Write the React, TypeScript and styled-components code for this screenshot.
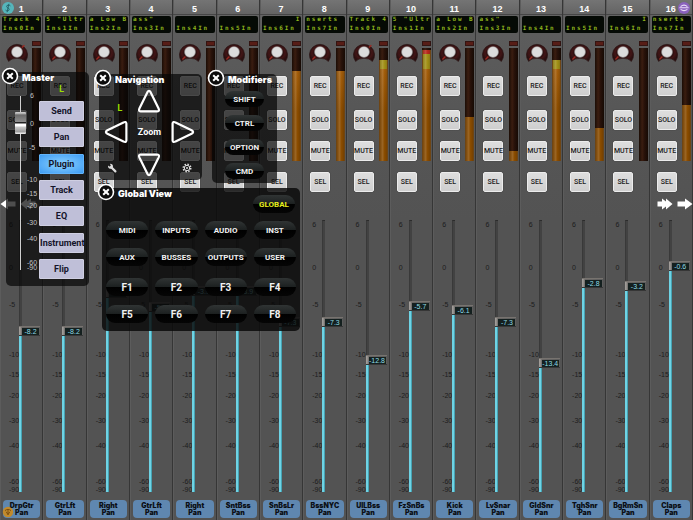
import React, { useState } from "react";
import styled, { createGlobalStyle, css } from "styled-components";

const Global = createGlobalStyle`
  * { box-sizing: border-box; }
  body { margin: 0; background: #545454; font-family: "Liberation Sans", Arial, sans-serif; }
  button { font-family: inherit; border: 0; padding: 0; cursor: pointer; }
`;

const wide = css`font-family: Inter, "Liberation Sans", sans-serif; font-weight: 900;`;

/* ---------- data ---------- */

type Strip = {
  name: string;
  lcd: string;
  db: number;
  meter: number;
  hot?: boolean;
};

const initialStrips: Strip[] = [
  { name: "DrpGtr", lcd: "Track 4", db: -8.2, meter: 0, hot: true },
  { name: "GtrLft", lcd: '5 "Ultr', db: -8.2, meter: 0 },
  { name: "Right", lcd: "a Low B", db: -4.2, meter: 0 },
  { name: "GtrLft", lcd: 'ass"', db: -5.8, meter: 0 },
  { name: "Right", lcd: "", db: -3.9, meter: 0 },
  { name: "SntBss", lcd: "", db: -3.9, meter: 0 },
  { name: "SnBsLr", lcd: "      I", db: -7.3, meter: 90 },
  { name: "BssNYC", lcd: "nserts", db: -7.3, meter: 90 },
  { name: "UlLBss", lcd: "Track 4", db: -12.8, meter: 101, hot: true },
  { name: "FzSnBs", lcd: '5 "Ultr', db: -5.7, meter: 111 },
  { name: "Kick", lcd: "a Low B", db: -6.1, meter: 44 },
  { name: "LvSnar", lcd: 'ass"', db: -7.3, meter: 10 },
  { name: "GldSnr", lcd: "", db: -13.4, meter: 101 },
  { name: "TghSnr", lcd: "", db: -2.8, meter: 33 },
  { name: "BgRmSn", lcd: "      I", db: -3.2, meter: 0 },
  { name: "Claps", lcd: "nserts", db: -0.6, meter: 56 },
];

const stripScale: [number, number][] = [
  [6, 43], [0, 37], [-5, 50], [-10, 20], [-15, 21],
  [-20, 25], [-30, 25], [-40, 36], [-60, 8], [-90, 8],
];

const masterScale: [number, number][] = [
  [6, 28], [0, 24], [-5, 32], [-10, 14], [-15, 12],
  [-20, 17], [-30, 16], [-40, 24], [-60, 5], [-90, 8],
];

/* Distance from the top of the scale for a level in dB. */
function travel(db: number) {
  let y = 0;
  for (let i = 0; i < stripScale.length - 1; i++) {
    const [from, gap] = stripScale[i];
    const to = stripScale[i + 1][0];
    if (db >= to) return Math.round(y + (gap * (from - db)) / (from - to));
    y += gap;
  }
  return y;
}

/* ---------- channel strips ---------- */

const Surface = styled.main`
  position: relative;
  min-height: 100vh;
  overflow: hidden;
  background: #545454;
`;

const Strips = styled.div`
  display: grid;
  grid-template-columns: repeat(16, minmax(0, 1fr));
  min-height: 100vh;
`;

const StripBox = styled.section`
  display: flex;
  flex-direction: column;
  border-right: 1px solid #363636;
  box-shadow: inset 1px 0 #5c5c5c;
  background: linear-gradient(#747474 0, #646464 14px, #5c5c5c 34px, #565656 120px, #535353 220px);
`;

const StripNumber = styled.h2`
  margin: 0;
  height: 15px;
  font-size: 9px;
  line-height: 18px;
  text-align: center;
  color: #fff;
  border-bottom: 1px solid #464646;
`;

const Lcd = styled.div`
  height: 17px;
  margin: 1px 1px 0 2px;
  padding: 0 0 0 1px;
  background: #050a05;
  border-radius: 2px;
  overflow: hidden;
`;

const LcdLine = styled.div<{ $second?: boolean }>`
  display: grid;
  grid-template-columns: repeat(7, minmax(0, 1fr));
  height: ${(p) => (p.$second ? 10 : 6)}px;
  line-height: ${(p) => (p.$second ? 12 : 5)}px;
  font-family: "DejaVu Sans Mono", monospace;
  font-size: 6px;
  font-weight: 700;
  color: #8fb51c;
  white-space: pre;
`;

const Middle = styled.div`
  display: flex;
  justify-content: space-between;
  padding: 7px 1px 28px 6px;
`;

const Controls = styled.div`
  display: flex;
  flex-direction: column;
  align-items: center;
  width: 22px;
`;

const Key = styled.button<{ $gap: number }>`
  width: 20px;
  height: 20px;
  margin-top: ${(p) => p.$gap}px;
  display: flex;
  justify-content: center;
  align-items: center;
  overflow: visible;
  font-family: Roboto, sans-serif;
  font-size: 7px;
  font-weight: 500;
  color: #1c1c1c;
  background: linear-gradient(#dedede, #cfcfcf);
  border: 1px solid #ececec;
  border-radius: 2px;
  box-shadow: 0 0 1px #222;
`;

const MeterColumn = styled.div`
  width: 9px;
  padding-top: 1px;
`;

const ClipLed = styled.div`
  height: 5px;
  margin-bottom: 2px;
  background: #571d16;
  border: 1px solid #331411;
`;

const Meter = styled.div`
  display: flex;
  flex-direction: column;
  justify-content: flex-end;
  height: 113px;
  background: linear-gradient(90deg, #1a0c05, #3a1d10 35%, #28120a 60%, #160a04);
`;

const MeterFill = styled.div`
  box-shadow: inset 1px 0 #6e4514, inset -1px 0 #6e4514;
  background:
    linear-gradient(90deg, #0003, #ffffff24 40%, #0000 60%, #0003),
    linear-gradient(0deg, #8a4c00 0 50px, #a55f0c 92px, #a19017 92px 107px, #b8291c 107px);
`;

const FaderArea = styled.div`
  display: flex;
  height: 272px;
  padding-left: 9px;
`;

const Ticks = styled.div<{ $light?: boolean }>`
  width: ${(p) => (p.$light ? 12 : 10)}px;
  padding-top: 1px;
  font-size: 7px;
  line-height: 8px;
  text-align: ${(p) => (p.$light ? "center" : "left")};
  color: ${(p) => (p.$light ? "#c4c4c4" : "#1c1c1c")};
  white-space: nowrap;
`;

const Tick = styled.div<{ $gap: number }>`
  height: ${(p) => p.$gap}px;
`;

const Track = styled.div`
  position: relative;
  display: flex;
  flex-direction: column;
  flex: 1;
  min-width: 0;
`;

const Slot = styled.div`
  flex: none;
  width: 3px;
  background: #424242;
  border-left: 1px solid #393939;
  border-top: 1px solid #2c2c2c;
`;

const Cap = styled.div`
  flex: none;
  display: flex;
  align-items: center;
  align-self: flex-start;
  height: 10px;
  padding: 0 1px 0 3px;
  background: linear-gradient(90deg, #a09c98 0 1px, #6b6866 3px, #5c5c5c);
  border-top: 1px solid #77736f;
  border-bottom: 1px solid #363636;
`;

const Readout = styled.output`
  display: block;
  min-width: 17px;
  height: 7px;
  line-height: 7px;
  font-size: 7px;
  text-align: center;
  color: #8fdbe4;
  background: #14201f;
`;

const Level = styled.div`
  flex: 1;
  width: 3px;
  background: #6fd3e4;
  border-right: 1px solid #46a3b4;
`;

const HiddenRange = styled.input`
  position: absolute;
  inset: 0;
  width: 100%;
  height: 100%;
  margin: 0;
  opacity: 0;
  writing-mode: vertical-lr;
  direction: rtl;
  cursor: pointer;
`;

const NamePlate = styled.button`
  && { ${wide} }
  height: 18px;
  margin: 8px 2px 2px 3px;
  font-size: 7px;
  line-height: 7px;
  color: #0b0f16;
  background: #5f87b0;
  border-radius: 4px;
  display: flex;
  flex-direction: column;
  align-items: center;
  justify-content: center;
`;

function Knob({ hot }: { hot?: boolean }) {
  return (
    <svg width="22" height="23" viewBox="0 0 22 23" aria-hidden="true">
      <defs>
        <radialGradient id="ring">
          <stop offset="0.45" stopColor="#1c0a0a" />
          <stop offset="0.75" stopColor="#421516" />
          <stop offset="1" stopColor="#2b1010" />
        </radialGradient>
      </defs>
      <path d="M2.6 21.4A10.6 10.6 0 1 1 19.4 21.4Q16.5 18.3 11 18.3Q5.5 18.3 2.6 21.4Z" fill="url(#ring)" stroke="#2a1414" strokeWidth="0.6" />
      <path d={hot ? "M16 7.6l2.4-2.4" : "M3.4 19.4l3-2.8"} stroke="#9c2a22" strokeWidth="1.4" />
      <circle cx="11" cy="12" r="5.8" fill="#9a9696" />
      <circle cx="11" cy="12" r="5" fill="#dcdcdc" />
    </svg>
  );
}

function LcdText({ text, second }: { text: string; second?: boolean }) {
  return (
    <LcdLine $second={second}>
      {text.split("").map((c, i) => (
        <span key={i}>{c}</span>
      ))}
    </LcdLine>
  );
}

function Scale({ scale, light }: { scale: [number, number][]; light?: boolean }) {
  return (
    <Ticks $light={light}>
      {scale.map(([db, gap]) => (
        <Tick key={db} $gap={gap}>{db}</Tick>
      ))}
    </Ticks>
  );
}

const keys: [string, number][] = [["REC", 13], ["SOLO", 14], ["MUTE", 11], ["SEL", 11]];

function ChannelStrip({ strip, index }: { strip: Strip; index: number }) {
  const [db, setDb] = useState(strip.db);
  return (
    <StripBox>
      <StripNumber>{index + 1}</StripNumber>
      <Lcd>
        <LcdText text={strip.lcd} />
        <LcdText text={`Ins${index % 8}In`} second />
      </Lcd>
      <Middle>
        <Controls>
          <Knob hot={strip.hot} />
          {keys.map(([label, gap]) => (
            <Key key={label} $gap={gap}>{label}</Key>
          ))}
        </Controls>
        <MeterColumn>
          <ClipLed />
          <Meter>
            <MeterFill style={{ height: strip.meter }} />
          </Meter>
        </MeterColumn>
      </Middle>
      <FaderArea>
        <Scale scale={stripScale} />
        <Track>
          <Slot style={{ height: Math.max(0, travel(db) - 6) }} />
          <Cap>
            <Readout>{db.toFixed(1)}</Readout>
          </Cap>
          <Level />
          <HiddenRange
            type="range"
            min={-90}
            max={6}
            step={0.1}
            value={db}
            aria-label={`${strip.name} level`}
            onChange={(e) => setDb(Number(e.target.value))}
          />
        </Track>
      </FaderArea>
      <NamePlate>
        <span>{strip.name}</span>
        <span>Pan</span>
      </NamePlate>
    </StripBox>
  );
}

/* ---------- badges and bank arrows ---------- */

const Badge = styled.button<{ $corner: "tl" | "tr" | "bl" }>`
  position: absolute;
  ${(p) => (p.$corner === "bl" ? "bottom: 2px;" : "top: 2px;")}
  ${(p) => (p.$corner === "tr" ? "right: 3px;" : "left: 2px;")}
  width: 12px;
  height: 12px;
  background: none;
  svg { display: block; }
`;

const BankArrows = styled.nav<{ $side: "left" | "right" }>`
  position: absolute;
  top: 198px;
  ${(p) => p.$side}: 0;
  display: flex;
  gap: 4px;
  button { background: none; height: 12px; }
  svg { display: block; }
`;

const singleArrow = "M0.5 3.5H8V0.5L15.5 6L8 11.5V8.5H0.5Z";
const doubleArrow = "M0.5 3.5H5V0.5L9 3.5V0.5L15.5 6L9 11.5V8.5L5 11.5V8.5H0.5Z";

function Arrow({ label, d, back }: { label: string; d: string; back?: boolean }) {
  return (
    <button aria-label={label}>
      <svg width="16" height="12" viewBox="0 0 16 12">
        <path d={d} fill="#fff" transform={back ? "matrix(-1 0 0 1 16 0)" : undefined} />
      </svg>
    </button>
  );
}

/* ---------- floating panels ---------- */

const Panel = styled.section<{ $x: number; $y: number; $w: number; $solid?: boolean }>`
  position: absolute;
  left: ${(p) => p.$x}px;
  top: ${(p) => p.$y}px;
  width: ${(p) => p.$w}px;
  border-radius: 5px;
  background: ${(p) => (p.$solid ? "rgba(8, 8, 8, 0.83)" : "rgba(6, 6, 6, 0.71)")};
`;

const CloseButton = styled.button`
  position: absolute;
  left: -5px;
  top: -5px;
  width: 18px;
  height: 18px;
  background: none;
  svg { display: block; }
`;

const TitleBar = styled.header`
  display: flex;
  justify-content: space-between;
  align-items: flex-start;
  padding: 0 5px 0 16px;
`;

const Title = styled.h3`
  ${wide}
  margin: 0;
  font-size: 9px;
  line-height: 12px;
  color: #fff;
  white-space: nowrap;
`;

function Close({ label }: { label: string }) {
  return (
    <CloseButton aria-label={`Close ${label}`}>
      <svg width="18" height="18" viewBox="0 0 18 18">
        <circle cx="9" cy="9" r="7.5" fill="#0c0c0c" stroke="#fff" strokeWidth="1.6" />
        <path d="M6.2 6.2L11.8 11.8M11.8 6.2L6.2 11.8" stroke="#fff" strokeWidth="2" />
      </svg>
    </CloseButton>
  );
}

const Pixel = styled.span<{ $inset?: boolean }>`
  font-family: "DejaVu Sans Mono", monospace;
  font-size: 9px;
  line-height: 10px;
  font-weight: 700;
  color: #9be000;
  ${(p) => p.$inset && "align-self: end; padding: 0 0 2px 8px;"}
`;

const MasterBody = styled.div`
  display: flex;
  padding: 0 5px 7px 9px;
`;

const MasterTrack = styled.div`
  position: relative;
  width: 11px;
  height: 174px;
  margin-top: 12px;
  padding-top: 16px;
  background: linear-gradient(#d0d0d0, #d0d0d0) center / 1px 100% no-repeat;
`;

const MasterCap = styled.div`
  height: 22px;
  border-radius: 1px;
  background: linear-gradient(#c8c8c8 0 1px, #6b6b6b 3px, #8f8f8f 10px, #222 10px 11px, #fff 12px 14px, #c9c9c9 15px, #9b9b9b 20px, #e6e6e6 21px);
`;

const MasterTicks = styled.div`
  margin-top: 7px;
  width: 13px;
`;

const ModeColumn = styled.div`
  flex: 1;
  display: flex;
  flex-direction: column;
  align-items: center;
`;

const ModeList = styled.div`
  display: flex;
  flex-direction: column;
  justify-content: space-between;
  width: 45px;
  height: 178px;
  margin-top: 7px;
`;

const ModeButton = styled.button<{ $on?: boolean }>`
  && { font-family: Roboto, "Liberation Sans", sans-serif; }
  height: 20px;
  font-size: 9px;
  font-weight: 700;
  color: #14142a;
  border-radius: 1px;
  background: ${(p) => (p.$on ? "radial-gradient(#8cd2ff, #3e9cf4)" : "#bfbfd8")};
  border: 1px solid ${(p) => (p.$on ? "#62b4fb" : "#cfcfe2")};
`;

const NavGrid = styled.div`
  display: grid;
  grid-template-columns: repeat(3, minmax(0, 1fr));
  grid-template-rows: 29px 34px 31px;
  justify-items: center;
  align-items: center;
  padding-right: 2px;
  button { background: none; height: 24px; }
  svg { display: block; }
`;

const ToolButton = styled.button<{ $side: "start" | "end" }>`
  justify-self: ${(p) => p.$side};
  width: 26px;
  height: 24px;
  display: flex;
  justify-content: center;
  padding-top: 10px;
`;

const ZoomLabel = styled.span`
  font-family: Roboto, sans-serif;
  font-size: 9px;
  font-weight: 700;
  color: #fff;
`;

const ModifierList = styled.div`
  display: flex;
  flex-direction: column;
  align-items: center;
  gap: 8px;
  padding: 5px 0 4px;
`;

const Pill = styled.button<{ $w?: number; $large?: boolean; $accent?: boolean }>`
  && { font-family: Roboto, "Liberation Sans", sans-serif; }
  width: ${(p) => (p.$w ? `${p.$w}px` : "100%")};
  height: ${(p) => (p.$w === 39 ? 16 : 18)}px;
  border-radius: 9px;
  font-size: ${(p) => (p.$large ? 10 : 8)}px;
  font-weight: 700;
  color: ${(p) => (p.$accent ? "#e8ee1c" : "#f2f2f2")};
  background: linear-gradient(#303434, #1c2020 50%, #000 50%, #050505);
`;

const FunctionGrid = styled.div<{ $last?: boolean }>`
  display: grid;
  grid-template-columns: repeat(4, minmax(0, 1fr));
  gap: 9px 7px;
  padding: ${(p) => (p.$last ? "12px 4px 8px" : "8px 4px 0")};
`;

const GlobalSlot = styled.div`
  display: flex;
  padding-top: 7px;
`;

const trianglePath = "M10.3 3.4Q12 0.4 13.7 3.4L21.6 19.5Q22.8 22.2 20.4 22.4H3.6Q1.2 22.2 2.4 19.5Z";

function Triangle({ label, angle }: { label: string; angle: number }) {
  return (
    <button aria-label={label}>
      <svg width="24" height="24" viewBox="0 0 24 24">
        <path d={trianglePath} fill="none" stroke="#fff" strokeWidth="2.2" strokeLinejoin="round" transform={`rotate(${angle} 12 12)`} />
      </svg>
    </button>
  );
}

const modes = ["Send", "Pan", "Plugin", "Track", "EQ", "Instrument", "Flip"];
const views = ["MIDI", "INPUTS", "AUDIO", "INST", "AUX", "BUSSES", "OUTPUTS", "USER"];

function MasterPanel() {
  const [mode, setMode] = useState("Plugin");
  return (
    <Panel $x={6} $y={72} $w={83}>
      <Close label="Master" />
      <TitleBar><Title>Master</Title></TitleBar>
      <MasterBody>
        <MasterTrack>
          <MasterCap />
          <HiddenRange type="range" aria-label="Master level" />
        </MasterTrack>
        <MasterTicks><Scale scale={masterScale} light /></MasterTicks>
        <ModeColumn>
          <Pixel>L</Pixel>
          <ModeList>
            {modes.map((m) => (
              <ModeButton key={m} $on={m === mode} onClick={() => setMode(m)}>{m}</ModeButton>
            ))}
          </ModeList>
        </ModeColumn>
      </MasterBody>
    </Panel>
  );
}

function NavigationPanel() {
  return (
    <Panel $x={99} $y={74} $w={103}>
      <Close label="Navigation" />
      <TitleBar><Title>Navigation</Title></TitleBar>
      <NavGrid>
        <Pixel $inset>L</Pixel>
        <Triangle label="Up" angle={0} />
        <span />
        <Triangle label="Left" angle={-90} />
        <ZoomLabel>Zoom</ZoomLabel>
        <Triangle label="Right" angle={90} />
        <ToolButton $side="start" aria-label="Tools">
          <svg width="10" height="10" viewBox="0 0 10 10">
            <path d="M4.3 4.3L8.4 8.4" stroke="#ddd" strokeWidth="2.2" strokeLinecap="round" />
            <path d="M1.1 2.6A2.5 2.5 0 1 0 2.9 0.9L3.8 2.2L3.4 3.3L2.2 3.6Z" fill="#ddd" />
          </svg>
        </ToolButton>
        <Triangle label="Down" angle={180} />
        <ToolButton $side="end" aria-label="Settings">
          <svg width="10" height="10" viewBox="0 0 10 10">
            <circle cx="5" cy="5" r="3.7" fill="none" stroke="#ddd" strokeWidth="1.6" strokeDasharray="1.5 1.4" />
            <circle cx="5" cy="5" r="2.7" fill="none" stroke="#ddd" />
            <circle cx="5" cy="5" r="1" fill="#ddd" />
          </svg>
        </ToolButton>
      </NavGrid>
    </Panel>
  );
}

export default function App() {
  return (
    <>
      <Global />
      <Surface>
        <Strips>
          {initialStrips.map((s, i) => (
            <ChannelStrip key={i} strip={s} index={i} />
          ))}
        </Strips>

        <Badge $corner="tl" aria-label="Session">
          <svg width="12" height="12" viewBox="0 0 12 12">
            <circle cx="6" cy="6" r="6" fill="#55b5bb" />
            <path d="M8.4 3.9C7.4 2.6 4.4 2.9 4.6 4.6C4.8 6 7.3 5.9 7.2 7.5C7 9.2 4.4 9.2 3.5 8M6.9 1.8L5.1 10.2" fill="none" stroke="#245f66" strokeWidth="0.9" />
          </svg>
        </Badge>
        <Badge $corner="tr" aria-label="Connection">
          <svg width="12" height="12" viewBox="0 0 12 12">
            <circle cx="6" cy="6" r="6" fill="#8a62bd" />
            <path d="M2.6 4.6Q6 1.6 9.4 4.6M1.4 5.8H10.6M2.6 7.4Q6 9.8 9.4 7.4" fill="none" stroke="#eadcf8" strokeWidth="1.1" />
          </svg>
        </Badge>
        <Badge $corner="bl" aria-label="Touch">
          <svg width="12" height="12" viewBox="0 0 12 12">
            <circle cx="6" cy="6" r="5.2" fill="#c18a2c" />
            <path d="M3 4.6C4.6 3 7.4 3 9 4.6M6 4V9M4.2 5.8L6 8.6L7.8 5.8" fill="none" stroke="#7c4f10" strokeWidth="1" />
          </svg>
        </Badge>

        <BankArrows $side="left">
          <Arrow label="Previous channel" d={singleArrow} back />
          <Arrow label="Previous bank" d={doubleArrow} back />
        </BankArrows>
        <BankArrows $side="right">
          <Arrow label="Next bank" d={doubleArrow} />
          <Arrow label="Next channel" d={singleArrow} />
        </BankArrows>

        <MasterPanel />
        <NavigationPanel />
        <Panel $x={212} $y={74} $w={65}>
          <Close label="Modifiers" />
          <TitleBar><Title>Modifiers</Title></TitleBar>
          <ModifierList>
            {["SHIFT", "CTRL", "OPTION", "CMD"].map((m) => (
              <Pill key={m} $w={39}>{m}</Pill>
            ))}
          </ModifierList>
        </Panel>
        <Panel $x={102} $y={188} $w={198} $solid>
          <Close label="Global View" />
          <TitleBar>
            <Title>Global View</Title>
            <GlobalSlot><Pill $w={42} $accent>GLOBAL</Pill></GlobalSlot>
          </TitleBar>
          <FunctionGrid>
            {views.map((v) => <Pill key={v}>{v}</Pill>)}
          </FunctionGrid>
          <FunctionGrid $last>
            {[1, 2, 3, 4, 5, 6, 7, 8].map((n) => <Pill key={n} $large>{`F${n}`}</Pill>)}
          </FunctionGrid>
        </Panel>
      </Surface>
    </>
  );
}
